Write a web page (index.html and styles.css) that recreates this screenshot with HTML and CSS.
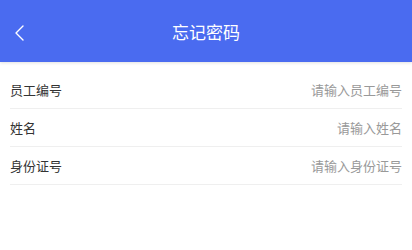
FILE: index.html
```html
<!DOCTYPE html>
<html lang="zh-CN">
<head>
  <meta charset="UTF-8">
  <meta name="viewport" content="width=device-width, initial-scale=1.0">
  <title>忘记密码</title>
  <link rel="stylesheet" href="styles.css">
</head>
<body>
  <div class="header">
    <span class="back-btn">
      <svg width="12" height="18" viewBox="0 0 12 18">
        <polyline points="9,2 2,9 9,16" fill="none" stroke="#fff" stroke-width="1.4" stroke-linecap="round" stroke-linejoin="round"/>
      </svg>
    </span>
    <h1>忘记密码</h1>
  </div>
  <div class="form-list">
    <div class="form-row">
      <label for="staff-no">员工编号</label>
      <input type="text" id="staff-no" placeholder="请输入员工编号">
    </div>
    <div class="form-row">
      <label for="name">姓名</label>
      <input type="text" id="name" placeholder="请输入姓名">
    </div>
    <div class="form-row">
      <label for="id-no">身份证号</label>
      <input type="text" id="id-no" placeholder="请输入身份证号">
    </div>
  </div>
</body>
</html>
```

FILE: styles.css
```css
body {
  margin: 0;
  font-family: "Noto Sans CJK SC", "Noto Sans", sans-serif;
  background: #fff;
  color: #333;
}
.header {
  height: 62px;
  background: #4a6bf0;
  display: flex;
  align-items: center;
  justify-content: center;
  position: relative;
  box-shadow: 0 1px 3px rgba(0, 0, 0, 0.12);
}
.header h1 {
  margin: 0;
  font-size: 17px;
  font-weight: 400;
  color: #fff;
}
.back-btn {
  position: absolute;
  left: 14px;
  top: 24px;
  display: flex;
}
.form-list {
  margin-top: 9px;
}
.form-row {
  display: flex;
  align-items: center;
  height: 37px;
  margin: 0 10px;
  border-bottom: 1px solid #efefef;
}
.form-row label {
  font-size: 13px;
  color: #333;
  white-space: nowrap;
}
.form-row input {
  flex: 1;
  min-width: 0;
  border: none;
  outline: none;
  padding: 0;
  text-align: right;
  font-family: inherit;
  font-size: 13px;
  color: #333;
  background: transparent;
}
.form-row input::placeholder {
  color: #999;
}
```
